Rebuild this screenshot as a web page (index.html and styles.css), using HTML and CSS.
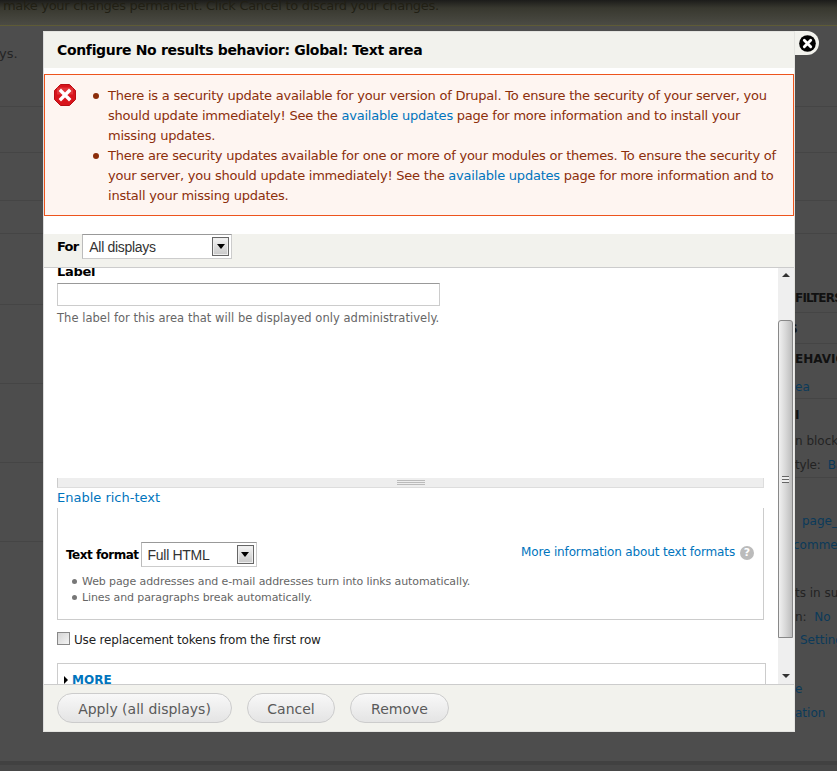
FILE: index.html
```html
<!DOCTYPE html>
<html lang="en">
<head>
<meta charset="utf-8">
<title>Configure No results behavior</title>
<link rel="stylesheet" href="styles.css">
</head>
<body>
<div class="page">
  <div class="notice"><span>make your changes permanent. Click Cancel to discard your changes.</span></div>
  <div class="backdrop">
    <div class="left-note">ys.</div>
    <div class="side">
      <div class="r h i1">FILTERS</div>
      <div class="r h i2">S</div>
      <div class="r h i3">EHAVIOR</div>
      <div class="r a i4">ea</div>
      <div class="r h i5">I</div>
      <div class="r i6">n block</div>
      <div class="r i7">tyle:&nbsp; <span class="a">Basic</span></div>
      <div class="r a i8">page_1</div>
      <div class="r a i9">comment</div>
      <div class="r i10">ts in sub</div>
      <div class="r i11">n:&nbsp; <span class="a">No</span></div>
      <div class="r a i12">Settings</div>
      <div class="r a i13">e</div>
      <div class="r a i14">ation</div>
    </div>
  </div>
  <div class="base"></div>

  <div class="dialog">
    <a class="close" href="#" aria-label="Close">
      <svg width="17" height="17" viewBox="0 0 18 18"><circle cx="9" cy="9" r="8.8" fill="#000"/><path d="M5.6 5.6l6.8 6.8M12.4 5.6l-6.8 6.8" stroke="#fff" stroke-width="3" stroke-linecap="round"/></svg>
    </a>
    <h1 class="title">Configure No results behavior: Global: Text area</h1>
    <div class="messages">
      <svg class="err" width="22" height="22" viewBox="0 0 22 22"><path d="M6.5 0.5h9l6 6v9l-6 6h-9l-6-6v-9z" fill="#d8141c" stroke="#b80e14"/><path d="M3 3.5h16v7H3z" fill="#ee5a5e" opacity=".45"/><path d="M7 7l8 8M15 7l-8 8" stroke="#fff" stroke-width="3.4" stroke-linecap="square"/></svg>
      <ul class="msg-list">
        <li>There is a security update available for your version of Drupal. To ensure the security of your server, you should update immediately! See the <a href="#">available updates</a> page for more information and to install your missing updates.</li>
        <li>There are security updates available for one or more of your modules or themes. To ensure the security of your server, you should update immediately! See the <a href="#">available updates</a> page for more information and to install your missing updates.</li>
      </ul>
    </div>
    <div class="for-bar">
      <label class="strong">For</label>
      <div class="select sel-for"><span>All displays</span><i class="sel-btn"><b></b></i></div>
    </div>
    <div class="scroller">
      <div class="content">
        <label class="strong label-top">Label</label>
        <input class="text-input" type="text">
        <p class="desc">The label for this area that will be displayed only administratively.</p>
        <div class="textarea-space"></div>
        <div class="grippie"><i></i></div>
        <a class="rich" href="#">Enable rich-text</a>
        <div class="filter">
          <div class="format-row">
            <label class="strong small">Text format</label>
            <div class="select sel-format"><span>Full HTML</span><i class="sel-btn"><b></b></i></div>
            <a class="more-info" href="#">More information about text formats</a>
            <span class="help">?</span>
          </div>
          <ul class="tips">
            <li>Web page addresses and e-mail addresses turn into links automatically.</li>
            <li>Lines and paragraphs break automatically.</li>
          </ul>
        </div>
        <label class="check"><input type="checkbox"><span>Use replacement tokens from the first row</span></label>
        <div class="more-box"><i class="tri"></i><a href="#">MORE</a></div>
      </div>
      <div class="scrollbar">
        <i class="up"></i>
        <div class="thumb"><i></i></div>
        <i class="down"></i>
      </div>
    </div>
    <div class="footer">
      <button class="btn b1">Apply (all displays)</button>
      <button class="btn b2">Cancel</button>
      <button class="btn b3">Remove</button>
    </div>
  </div>
</div>
</body>
</html>
```

FILE: styles.css
```css
* { box-sizing: border-box; }
html, body { margin: 0; padding: 0; }
body {
  width: 837px; height: 771px; overflow: hidden;
  background: #4d4d4d;
  font-family: "DejaVu Sans", sans-serif;
  font-size: 13px;
}
.page { position: relative; width: 837px; height: 771px; display: flex; flex-direction: column; overflow: hidden; }
.notice {
  height: 26px; flex: none; padding-left: 3px;
  background: linear-gradient(#1c1c1a 0, #38382f 8px, #4b4b44 25px);
  border-bottom: 1px solid #5e5b36;
  color: #211f14; font-size: 13px; line-height: 11px; white-space: nowrap; letter-spacing: -0.3px;
}
.backdrop {
  flex: 1; display: flex; justify-content: space-between; color: #222;
  background-color: #4d4d4d;
  background-image:
    linear-gradient(#454545, #454545), linear-gradient(#454545, #454545), linear-gradient(#454545, #454545),
    linear-gradient(#454545, #454545), linear-gradient(#454545, #454545), linear-gradient(#454545, #454545),
    linear-gradient(#454545, #454545), linear-gradient(#454545, #454545);
  background-repeat: no-repeat;
  background-size: 100% 1px;
  background-position: 0 80px, 0 126px, 0 174px, 0 207px, 0 278px, 0 357px, 0 436px, 0 515px;
}
.left-note { padding-top: 20px; font-size: 13px; line-height: 16px; margin-left: -1px; color: #242424; }
.side {
  width: 42px; display: grid; white-space: nowrap; overflow: hidden;
  grid-template-rows: 280px 31px 30px 28px 28px 26px 24px 56px 24px 48px 24px 23px 49px 24px;
  line-height: 16px; font-size: 12px; color: #232323;
  background-color: #4d4d4d;
  background-image:
    linear-gradient(#454545, #454545), linear-gradient(#454545, #454545), linear-gradient(#454545, #454545),
    linear-gradient(#454545, #454545), linear-gradient(#454545, #454545), linear-gradient(#454545, #454545),
    linear-gradient(#454545, #454545), linear-gradient(#454545, #454545);
  background-repeat: no-repeat;
  background-size: 100% 1px;
  background-position: 0 80px, 0 126px, 0 174px, 0 207px, 0 286px, 0 317px, 0 372px, 0 451px;
}
.r { grid-column: 1; align-self: end; white-space: pre; }
.i1 { grid-row: 1; letter-spacing: -0.8px; }
.i2 { grid-row: 2; margin-left: -6px; }
.i3 { grid-row: 3; } .i4 { grid-row: 4; }
.i5 { grid-row: 5; } .i6 { grid-row: 6; } .i7 { grid-row: 7; letter-spacing: -0.2px; } .i8 { grid-row: 8; padding-left: 7px; }
.i9 { grid-row: 9; margin-left: -2px; } .i10 { grid-row: 10; } .i11 { grid-row: 11; } .i12 { grid-row: 12; padding-left: 5px; }
.i13 { grid-row: 13; } .i14 { grid-row: 14; }
.h { font-weight: 700; color: #111; }
.a { color: #0b3a5a; }
.base { height: 10px; flex: none; background: #484848; border-top: 4px solid #414141; }

.dialog {
  position: absolute; left: 43px; top: 31px; width: 752px; height: 701px;
  background: #fff; border: 1px solid #e4e4e0; border-left-color: #dcdcdc;
  display: flex; flex-direction: column;
}
.close {
  position: absolute; left: 751px; top: -1px; width: 24px; height: 24px;
  background: #f2f2ed; border-radius: 0 12px 12px 0;
  display: flex; align-items: center; justify-content: center; padding-left: 0;
}
.title {
  margin: 0; height: 36px; flex: none; background: #f2f2ed;
  padding-left: 13px; font-size: 14px; font-weight: 700; line-height: 36px; color: #000; letter-spacing: -0.33px;
}
.messages {
  margin-top: 6px; height: 142px; flex: none; display: flex;
  background: #fef5f1; border: 1px solid #ed541d; color: #8c2e0b;
  padding: 9px 0 0 9px; line-height: 20px; letter-spacing: -0.23px;
}
.err { flex: none; }
.messages a { color: #0074bd; text-decoration: none; }
.msg-list { margin: 2px 0 0; padding: 0 10px 0 32px; list-style: none; }
.msg-list li { position: relative; }
.msg-list li::before {
  content: ""; position: absolute; left: -15px; top: 7px; width: 6px; height: 6px; border-radius: 50%; background: #8c2e0b;
}
.for-bar {
  margin-top: 18px; height: 33px; flex: none; background: #f2f2ed;
  display: flex; align-items: flex-start; padding-left: 13px; gap: 4px;
}
.strong { font-weight: 700; color: #000; }
.for-bar .strong { line-height: 26px; letter-spacing: -0.8px; }
.select {
  background: #fff; border: 1px solid #ccc; border-top-color: #999; border-left-color: #bbb;
  display: flex; align-items: center; justify-content: space-between;
  font-family: "Liberation Sans", sans-serif; font-size: 14px; letter-spacing: -0.3px; color: #333;
  padding-left: 6px; padding-right: 2px;
}
.sel-for { width: 150px; height: 25px; }
.sel-format { width: 116px; height: 25px; }
.sel-btn {
  width: 17px; height: 19px; border: 1px solid #666;
  background: linear-gradient(#f4f4f4, #c8c8c8);
  display: flex; align-items: center; justify-content: center; box-shadow: inset 0 0 0 1px #eee;
}
.sel-btn b { width: 0; height: 0; border: 4px solid transparent; border-top: 5px solid #000; border-bottom: 0; }
.scroller { height: 417px; flex: none; display: flex; border-top: 1px solid #ccc; overflow: hidden; }
.content { flex: 1; padding-left: 13px; overflow: hidden; }
.label-top { display: block; line-height: 16px; margin-top: -4px; height: 14px; letter-spacing: -0.3px; }
.text-input {
  display: block; margin: 5px 0 0; width: 383px; height: 23px; padding: 0;
  border: 1px solid #ccc; border-top-color: #999; background: #fff; outline: 0;
}
.desc { margin: 4px 0 0; font-size: 11.5px; line-height: 16px; color: #666; letter-spacing: 0.04px; }
.textarea-space { height: 152px; }
.grippie {
  width: 707px; height: 10px; background: #eee; border: 1px solid #ddd; border-width: 0 1px 1px 1px;
  border-left-color: #ccc;
  display: flex; justify-content: center; align-items: center;
}
.grippie i { width: 28px; height: 5px; border-top: 1px solid #bbb; border-bottom: 1px solid #bbb; background: linear-gradient(#eee 0 1px, #bbb 1px 2px, #eee 2px); }
.rich { display: block; height: 20px; line-height: 20px; color: #0074bd; text-decoration: none; font-size: 13px; }
.filter {
  width: 707px; height: 112px; border: 1px solid #ccc; border-top: 0; padding: 34px 0 0 8px;
}
.format-row { display: flex; align-items: center; height: 25px; }
.small { font-size: 12px; letter-spacing: -0.5px; margin-right: 2px; }
.more-info { margin-left: auto; color: #0074bd; text-decoration: none; font-size: 12px; letter-spacing: -0.14px; margin-top: -6px; }
.help {
  width: 14px; height: 14px; border-radius: 50%; background: #bbb; color: #fff; font-weight: 700;
  font-size: 11px; line-height: 14px; text-align: center; margin: -4px 9px 0 5px; flex: none;
}
.tips { margin: 7px 0 0; padding: 0 0 0 16px; font-size: 11px; line-height: 16px; color: #666; letter-spacing: -0.1px; list-style: none; }
.tips li { position: relative; }
.tips li::before {
  content: ""; position: absolute; left: -10px; top: 5px; width: 5px; height: 5px; border-radius: 50%; background: #777;
}
.check { display: flex; align-items: center; margin-top: 10px; height: 20px; font-size: 12px; color: #222; letter-spacing: -0.17px; }
.check input {
  appearance: none; margin: 0 4px 4px 0; width: 13px; height: 13px; border: 1px solid #888; background: linear-gradient(135deg, #d4d4d4, #f4f4f4);
}
.more-box {
  margin-top: 13px; width: 709px; height: 30px; border: 1px solid #ccc;
  padding: 7px 0 0 6px; display: flex; align-items: flex-start; gap: 4px;
  font-weight: 700; font-size: 12px; line-height: 18px;
}
.more-box a { color: #0074bd; text-decoration: none; }
.tri { margin-top: 5px; width: 0; height: 0; border: 4px solid transparent; border-left: 4px solid #000; border-right: 0; }
.scrollbar { width: 16px; flex: none; background: #efefef; position: relative; }
.up, .down { position: absolute; width: 0; height: 0; border: 4px solid transparent; left: 4px; }
.up { top: 5px; border-bottom: 4px solid #333; border-top: 0; }
.down { bottom: 6px; border-top: 4px solid #333; border-bottom: 0; }
.thumb {
  position: absolute; top: 52px; left: 0; width: 15px; height: 318px;
  border: 1px solid #888; border-radius: 3px 3px 0 0;
  background: linear-gradient(90deg, #f0f0f0, #d8d8d8 50%, #bcbcbc);
  display: flex; align-items: center; justify-content: center;
}
.thumb i { width: 7px; height: 7px; border-top: 1px solid #666; border-bottom: 1px solid #666; background: linear-gradient(#eee 0 2px, #666 2px 3px, #eee 3px); }
.footer {
  flex: 1; background: #f2f2ed; border-top: 1px solid #ccc;
  display: flex; align-items: flex-start; padding: 8px 0 0 13px; gap: 15px;
}
.btn {
  height: 30px; border: 1px solid #ccc; border-radius: 15px; padding: 1px 0 0;
  background: linear-gradient(#f8f8f8, #e4e4e4); color: #5a5a5a;
  font-family: "DejaVu Sans", sans-serif; font-size: 14px;
}
.b1 { width: 175px; } .b2 { width: 88px; } .b3 { width: 99px; }
```
